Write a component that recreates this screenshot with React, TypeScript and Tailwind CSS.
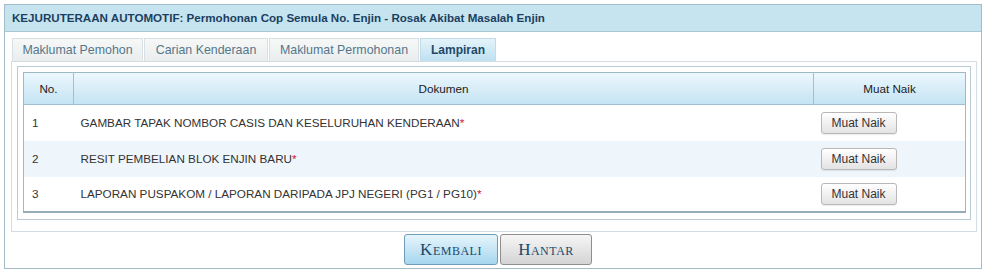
import React from 'react';

const tabs = [
    { label: 'Maklumat Pemohon', width: 'w-[131px]' },
    { label: 'Carian Kenderaan', width: 'w-[124px]' },
    { label: 'Maklumat Permohonan', width: 'w-[150px]' },
    { label: 'Lampiran', width: 'w-[76px]' },
];

const documents = [
    'GAMBAR TAPAK NOMBOR CASIS DAN KESELURUHAN KENDERAAN',
    'RESIT PEMBELIAN BLOK ENJIN BARU',
    'LAPORAN PUSPAKOM / LAPORAN DARIPADA JPJ NEGERI (PG1 / PG10)',
];

const App: React.FC = () => {
    return (
        <div className="w-[986px] h-[273px] bg-white pt-[4px] pl-[4px] font-['Liberation_Sans',Arial,sans-serif]">
            <div className="w-[978px] h-[265px] border border-[#a3bcc8] flex flex-col">
                <div className="h-[27px] bg-[#c5e4f0] border-b border-[#a9c6d3] pl-[7px] flex items-center text-[11.6px] font-bold text-[#1c3f5e]">
                    KEJURUTERAAN AUTOMOTIF: Permohonan Cop Semula No. Enjin - Rosak Akibat Masalah Enjin
                </div>

                <div className="ml-[6px] w-[966px] mt-[6px]">
                    <div className="flex gap-[1px] pl-[1px] h-[23px]">
                        {tabs.map((tab, i) => {
                            const active = i === tabs.length - 1;
                            return (
                                <div
                                    key={tab.label}
                                    className={
                                        active
                                            ? `${tab.width} flex items-center justify-center text-[12px] font-bold text-[#1d4866] bg-gradient-to-b from-[#e4f3fa] to-[#bfe0f0] border border-b-0 border-[#c3dbe6]`
                                            : `${tab.width} flex items-center justify-center text-[12.4px] text-[#55778b] bg-gradient-to-b from-[#f7f8f8] to-[#e9eded] border border-b-0 border-[#d9e0e3]`
                                    }
                                >
                                    {tab.label}
                                </div>
                            );
                        })}
                    </div>

                    <div className="h-[171px] border border-[#d3dde2] pt-[4px] pl-[5px] pr-[5px]">
                        <div className="h-[154px] border border-[#b9ccd5] pt-[5px] pl-[5px] pr-[4px]">
                            <table className="w-[943px] border-collapse text-[11.7px] text-[#333] border border-[#9fb8c5] border-b-2 border-b-[#95adb9]">
                                <thead>
                                    <tr className="h-[32px] bg-gradient-to-b from-[#ecf7fd] to-[#c3e3f3] text-[#222]">
                                        <th className="w-[50px] font-normal border-r border-b border-[#9fc0d2]">No.</th>
                                        <th className="w-[740px] font-normal border-r border-b border-[#9fc0d2]">Dokumen</th>
                                        <th className="font-normal border-b border-[#9fc0d2]">Muat Naik</th>
                                    </tr>
                                </thead>
                                <tbody>
                                    {documents.map((doc, i) => (
                                        <tr key={doc} className={i === 1 ? 'h-[36px] bg-[#eef6fb]' : i === 2 ? 'h-[35px] bg-white' : 'h-[36px] bg-white'}>
                                            <td className="pl-[8px]">{i + 1}</td>
                                            <td className="pl-[7px]">
                                                {doc}
                                                <span className="text-[#c8102e]">*</span>
                                            </td>
                                            <td className="pl-[7px]">
                                                <button className="w-[76px] h-[22px] rounded-[3px] border border-[#b8b8b8] bg-gradient-to-b from-[#ffffff] to-[#e3e3e3] text-[12px] text-[#333] shadow-[0_1px_1px_rgba(0,0,0,0.08)]">
                                                    Muat Naik
                                                </button>
                                            </td>
                                        </tr>
                                    ))}
                                </tbody>
                            </table>
                        </div>
                    </div>
                </div>

                <div className="flex justify-center gap-[2px] mt-[2px] pl-[10px]">
                    <button className="w-[94px] h-[31px] rounded-[3px] border border-[#6f9cb8] bg-gradient-to-b from-[#e6f5fc] to-[#a6d6ee] text-[17px] text-[#1b4a6b] tracking-[0.5px] [font-variant:small-caps] font-['Liberation_Serif',serif]">
                        Kembali
                    </button>
                    <button className="w-[92px] h-[31px] rounded-[3px] border border-[#8e8e8e] bg-gradient-to-b from-[#f6f6f6] to-[#d4d4d4] text-[17px] text-[#1b4a6b] tracking-[0.5px] [font-variant:small-caps] font-['Liberation_Serif',serif]">
                        Hantar
                    </button>
                </div>
            </div>
        </div>
    );
};

export default App;
